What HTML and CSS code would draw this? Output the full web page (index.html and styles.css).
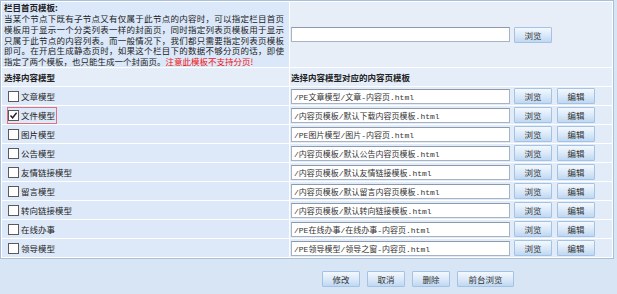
FILE: index.html
```html
<!DOCTYPE html>
<html lang="zh-CN">
<head>
  <meta charset="UTF-8" />
  <title>栏目模板设置</title>
  <link rel="stylesheet" href="styles.css">
</head>
<body>

  <table class="grid">
    <tr class="top-row">
      <td class="desc">
        <b>栏目首页模板:</b>
        <span class="line">当某个节点下既有子节点又有仅属于此节点的内容时，可以指定栏目首页</span>
        <span class="line">模板用于显示一个分类列表一样的封面页，同时指定列表页模板用于显示</span>
        <span class="line">只属于此节点的内容列表。而一般情况下，我们都只需要指定列表页模板</span>
        <span class="line">即可。在开启生成静态页时，如果这个栏目下的数据不够分页的话，即使</span>
        <span class="line last">指定了两个模板，也只能生成一个封面页。<em class="warn">注意此模板不支持分页!</em></span>
      </td>
      <td class="side">
        <div class="pick">
          <input class="path" type="text" value="">
          <button class="btn">浏览</button>
        </div>
      </td>
    </tr>
    <tr class="head">
      <th>选择内容模型</th>
      <th class="side">选择内容模型对应的内容页模板</th>
    </tr>
    <tr>
      <td class="model"><label class="chk"><span class="box"></span>文章模型</label></td>
      <td class="side"><div class="pick"><input class="path" type="text" value="/PE文章模型/文章-内容页.html"><button class="btn">浏览</button><button class="btn">编辑</button></div></td>
    </tr>
    <tr>
      <td class="model"><label class="chk focus"><span class="box"><svg width="9" height="9" viewBox="0 0 9 9"><path d="M1.5 4.5 L3.6 6.8 L7.6 1.8" fill="none" stroke="#222" stroke-width="1.4"/></svg></span>文件模型</label></td>
      <td class="side"><div class="pick"><input class="path" type="text" value="/内容页模板/默认下载内容页模板.html"><button class="btn">浏览</button><button class="btn">编辑</button></div></td>
    </tr>
    <tr>
      <td class="model"><label class="chk"><span class="box"></span>图片模型</label></td>
      <td class="side"><div class="pick"><input class="path" type="text" value="/PE图片模型/图片-内容页.html"><button class="btn">浏览</button><button class="btn">编辑</button></div></td>
    </tr>
    <tr>
      <td class="model"><label class="chk"><span class="box"></span>公告模型</label></td>
      <td class="side"><div class="pick"><input class="path" type="text" value="/内容页模板/默认公告内容页模板.html"><button class="btn">浏览</button><button class="btn">编辑</button></div></td>
    </tr>
    <tr>
      <td class="model"><label class="chk"><span class="box"></span>友情链接模型</label></td>
      <td class="side"><div class="pick"><input class="path" type="text" value="/内容页模板/默认友情链接模板.html"><button class="btn">浏览</button><button class="btn">编辑</button></div></td>
    </tr>
    <tr>
      <td class="model"><label class="chk"><span class="box"></span>留言模型</label></td>
      <td class="side"><div class="pick"><input class="path" type="text" value="/内容页模板/默认留言内容页模板.html"><button class="btn">浏览</button><button class="btn">编辑</button></div></td>
    </tr>
    <tr>
      <td class="model"><label class="chk"><span class="box"></span>转向链接模型</label></td>
      <td class="side"><div class="pick"><input class="path" type="text" value="/内容页模板/默认转向链接模板.html"><button class="btn">浏览</button><button class="btn">编辑</button></div></td>
    </tr>
    <tr>
      <td class="model"><label class="chk"><span class="box"></span>在线办事</label></td>
      <td class="side"><div class="pick"><input class="path" type="text" value="/PE在线办事/在线办事-内容页.html"><button class="btn">浏览</button><button class="btn">编辑</button></div></td>
    </tr>
    <tr>
      <td class="model"><label class="chk"><span class="box"></span>领导模型</label></td>
      <td class="side"><div class="pick"><input class="path" type="text" value="/PE领导模型/领导之窗-内容页.html"><button class="btn">浏览</button><button class="btn">编辑</button></div></td>
    </tr>
  </table>

  <div class="actions">
    <button class="btn act">修改</button>
    <button class="btn act">取消</button>
    <button class="btn act">删除</button>
    <button class="btn act wide">前台浏览</button>
  </div>

</body>
</html>
```

FILE: styles.css
```css
body {
  margin: 0;
  padding: 0;
  background: #d7e5f5;
  font-family: "Noto Sans CJK SC", "Noto Sans", sans-serif;
  font-size: 8.5px;
  color: #222;
}
.grid {
  width: 614px;
  border: 1px solid #a9c0da;
  border-collapse: separate;
  border-spacing: 1px;
  background: #fff;
}
.grid td,
.grid th {
  box-sizing: border-box;
  padding: 0 0 0 2px;
  height: 18px;
  background: #dde9f8;
  vertical-align: middle;
  text-align: left;
}
.grid td:first-child,
.grid th:first-child {
  width: 287px;
}
.grid .side {
  padding-left: 1px;
  background: #e2ecf8;
}
.top-row td {
  height: 65px;
}
.top-row .side {
  background: #e7eef8;
}
.desc {
  line-height: 10.8px;
  padding-right: 5px !important;
  background: #dbe8f9 !important;
}
.desc b {
  display: block;
  font-weight: 700;
}
.line {
  display: block;
  text-align: justify;
  text-align-last: justify;
}
.line.last {
  text-align-last: left;
}
.warn {
  font-style: normal;
  color: #f01010;
}
.head th {
  font-weight: 700;
  background: #e5edf8;
}
.head th.side {
  background: #e5edf8;
}
.model {
  padding-left: 6px !important;
}
.chk {
  display: inline-flex;
  align-items: center;
  gap: 2px;
  height: 15px;
  padding: 0 1px 0 0;
  border: 1px solid transparent;
  margin-left: -1px;
}
.chk.focus {
  border-color: #e0707e;
}
.box {
  box-sizing: border-box;
  width: 11px;
  height: 11px;
  border: 1px solid #5a5a5a;
  background: #fff;
  display: flex;
  align-items: center;
  justify-content: center;
}
.pick {
  display: flex;
  align-items: center;
}
.path {
  box-sizing: border-box;
  width: 219px;
  height: 15px;
  margin: 0;
  padding: 0 2px;
  border: 1px solid #a7b3c3;
  border-top-color: #8d9aab;
  background: #fff;
  font-family: "Liberation Mono", "Noto Sans CJK SC", monospace;
  font-size: 8px;
  color: #333;
}
.btn {
  box-sizing: border-box;
  height: 16px;
  width: 38px;
  margin: 0 0 0 4px;
  padding: 0;
  border: 1px solid #a4c3e4;
  border-radius: 1px;
  background: linear-gradient(#f3f8fe, #d9e8f8 55%, #bfd8f2);
  font-family: "Noto Sans CJK SC", sans-serif;
  font-size: 8.5px;
  color: #333;
  cursor: pointer;
}
.btn + .btn {
  margin-left: 5px;
}
.actions {
  display: flex;
  gap: 7px;
  padding: 12px 0 0 322px;
}
.btn.act {
  margin: 0;
  width: 38px;
}
.btn.wide {
  width: 57px;
}
```
